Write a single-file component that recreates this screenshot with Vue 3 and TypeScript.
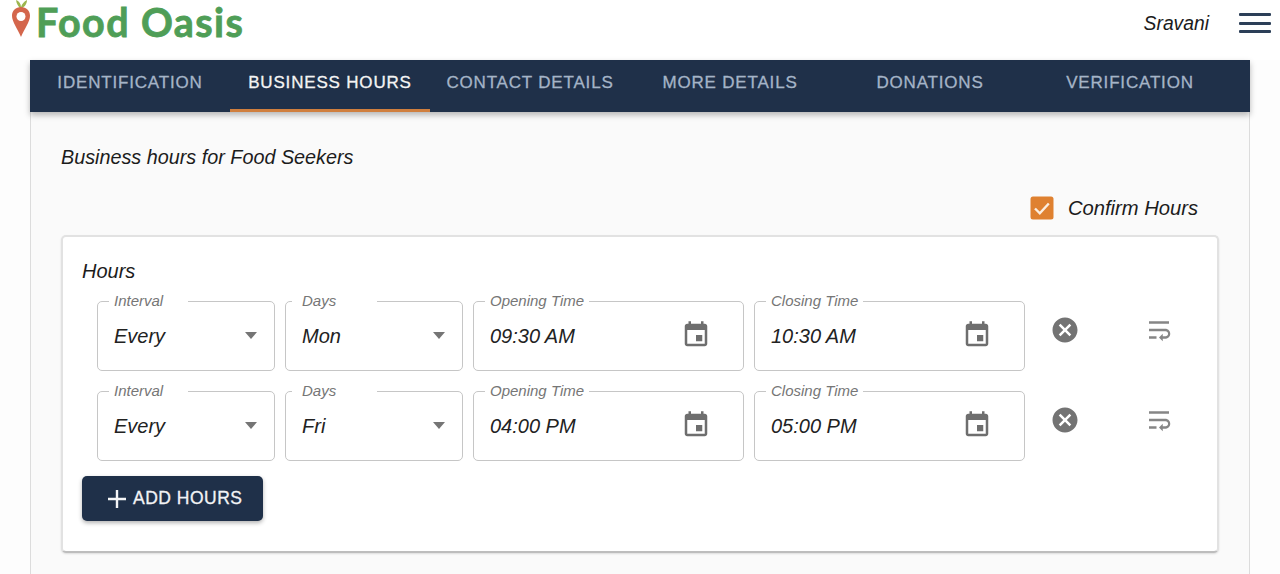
<script setup lang="ts">
interface HourRow { interval: string; day: string; open: string; close: string }

const tabs: string[] = ['Identification', 'Business Hours', 'Contact Details', 'More Details', 'Donations', 'Verification']
const rows: HourRow[] = [
  { interval: 'Every', day: 'Mon', open: '09:30 AM', close: '10:30 AM' },
  { interval: 'Every', day: 'Fri', open: '04:00 PM', close: '05:00 PM' }
]
const calendarPath = 'M17 12h-5v5h5v-5zM16 1v2H8V1H6v2H5c-1.11 0-1.99.9-1.99 2L3 19c0 1.1.89 2 2 2h14c1.1 0 2-.9 2-2V5c0-1.1-.9-2-2-2h-1V1h-2zm3 18H5V8h14v11z'
</script>

<template>
  <div class="page">
    <header class="topbar">
      <div class="brand">
        <svg class="pin" width="22" height="38" viewBox="0 0 22 38">
          <path d="M10.500 8.500C8.500 6.500 6.500 4 6 0c3 1 5 4 5 7 1-3 3-5.500 6-7 0 4-2.500 7-5.500 8.500z" fill="#9db54e" />
          <path d="M11 7c5.200 0 9 3.800 9 8.800 0 5.700-5.200 12.500-9 21.200C7.200 28.300 2 21.500 2 15.800 2 10.800 5.800 7 11 7z" fill="#d4664c" />
          <circle cx="11" cy="16.500" r="4.500" fill="#fff" />
        </svg>
        <span class="wordmark">Food Oasis</span>
      </div>
      <div class="user">
        <span class="username">Sravani</span>
        <div class="burger"><i></i><i></i><i></i></div>
      </div>
    </header>

    <main class="content">
      <nav class="tabs">
        <div v-for="(tab, i) in tabs" :key="tab" class="tab" :class="{ active: i === 1 }">{{ tab }}</div>
      </nav>

      <section class="panel">
        <p class="intro">Business hours for Food Seekers</p>
        <div class="confirm">
          <svg class="check" width="24" height="24" viewBox="0 0 24 24">
            <rect x="0.500" y="0.500" width="23" height="23" rx="2.500" fill="#df8130" />
            <path d="M5 12.500l4.800 4.800 9-9.800" fill="none" stroke="#fbeee0" stroke-width="2.400" />
          </svg>
          <span>Confirm Hours</span>
        </div>

        <div class="card">
          <div class="card-title">Hours</div>
          <div v-for="row in rows" :key="row.day" class="row">
            <div class="field select">
              <span class="label label-interval">Interval</span>
              <span class="value">{{ row.interval }}</span>
              <span class="caret"></span>
            </div>
            <div class="field select">
              <span class="label label-days">Days</span>
              <span class="value">{{ row.day }}</span>
              <span class="caret"></span>
            </div>
            <div class="field time">
              <span class="label">Opening Time</span>
              <span class="value">{{ row.open }}</span>
              <svg class="cal" width="30" height="30" viewBox="0 0 24 24"><path :d="calendarPath" /></svg>
            </div>
            <div class="field time">
              <span class="label">Closing Time</span>
              <span class="value">{{ row.close }}</span>
              <svg class="cal" width="30" height="30" viewBox="0 0 24 24"><path :d="calendarPath" /></svg>
            </div>
            <div class="actions">
              <svg width="30" height="30" viewBox="0 0 24 24"><path d="M12 2C6.470 2 2 6.470 2 12s4.470 10 10 10 10-4.470 10-10S17.530 2 12 2zm5 13.590L15.590 17 12 13.410 8.410 17 7 15.590 10.590 12 7 8.410 8.410 7 12 10.590 15.590 7 17 8.410 13.410 12 17 15.590z" /></svg>
              <svg width="30" height="30" viewBox="0 0 24 24"><path d="M4 19h6v-2H4v2zM20 5H4v2h16V5zm-3 6H4v2h13.250c1.100 0 2 .9 2 2s-.9 2-2 2H15v-2l-3 3 3 3v-2h2c2.210 0 4-1.790 4-4s-1.790-4-4-4z" /></svg>
            </div>
          </div>
          <button class="add" type="button">
            <svg width="20" height="20" viewBox="0 0 20 20"><path d="M10 1v18M1 10h18" stroke="#f4f5f7" stroke-width="2.400" fill="none" /></svg>
            <span>ADD HOURS</span>
          </button>
        </div>
      </section>
    </main>
  </div>
</template>

<style>
html, body { margin: 0; background: #fff; }
</style>

<style scoped>
.page {
  width: 1280px;
  height: 574px;
  overflow: hidden;
  background: #fdfdfd;
  font-family: "Liberation Sans", Arial, sans-serif;
  color: #1c1c1c;
}
.topbar {
  height: 60px;
  display: flex;
  justify-content: space-between;
  align-items: center;
  padding: 0 9px 0 10px;
  box-sizing: border-box;
  background: #fff;
}
.brand {
  display: flex;
  align-items: flex-start;
  height: 60px;
}
.pin { display: block; flex: none; margin-right: 4px; }
.wordmark {
  font-family: "Lato", sans-serif;
  font-size: 39.500px;
  font-weight: 700;
  line-height: 43px;
  letter-spacing: 1.400px;
  color: #4f9e57;
  -webkit-text-stroke: 0.800px #4f9e57;
}
.user {
  display: flex;
  align-items: center;
  gap: 30px;
  height: 46px;
  align-self: flex-start;
}
.username { font-style: italic; font-size: 19.300px; padding-top: 1px; }
.burger { width: 32px; display: flex; flex-direction: column; gap: 5.500px; }
.burger i { display: block; height: 3px; background: #2c3f58; border-radius: 1px; }

.content { padding: 0 30px; }
.tabs {
  position: relative;
  z-index: 1;
  display: flex;
  height: 52px;
  background: #1f3049;
  box-shadow: 0 3px 6px rgba(0, 0, 0, 0.28);
}
.tab {
  width: 200px;
  height: 52px;
  box-sizing: border-box;
  padding-top: 13px;
  line-height: 20px;
  text-align: center;
  text-transform: uppercase;
  font-size: 17px;
  letter-spacing: 0.820px;
  color: #a5b4c7;
  -webkit-text-stroke: 0.300px #a5b4c7;
}
.tab.active {
  color: #f4f4f4;
  -webkit-text-stroke: 0.300px #f4f4f4;
  border-bottom: 3px solid #d07f3e;
}
.panel {
  height: 480px;
  box-sizing: border-box;
  background: #fafafa;
  border: 1px solid #dcdcdc;
  border-top: 0;
  padding: 0 30px;
}
.intro {
  margin: 0;
  padding-top: 33px;
  font-style: italic;
  font-size: 19.800px;
  line-height: 24px;
}
.confirm {
  display: flex;
  justify-content: flex-end;
  align-items: center;
  gap: 14px;
  height: 24px;
  margin-top: 27px;
  padding-right: 21px;
  font-style: italic;
  font-size: 20.200px;
}
.check { display: block; margin-top: -1px; }
.card {
  height: 318px;
  box-sizing: border-box;
  margin-top: 15px;
  background: #fff;
  border: 2px solid #e2e2e2;
  border-bottom-color: #bdbdbd;
  border-radius: 5px;
  box-shadow: 0 1px 2px rgba(0, 0, 0, 0.12);
  padding: 0 19px;
}
.card-title {
  box-sizing: border-box;
  padding-top: 22px;
  font-style: italic;
  font-size: 20px;
  line-height: 24px;
  height: 64px;
}
.row {
  display: flex;
  gap: 10px;
  height: 70px;
  margin-bottom: 20px;
  padding-left: 15px;
}
.field {
  position: relative;
  box-sizing: border-box;
  height: 70px;
  border: 1px solid #c6c6c6;
  border-radius: 5px;
  display: flex;
  align-items: center;
  justify-content: space-between;
  padding: 0 16px;
}
.select { width: 178px; padding-right: 17px; }
.time { width: 271px; padding-right: 32px; }
.label {
  position: absolute;
  top: -10px;
  left: 11px;
  padding: 0 5px;
  background: #fff;
  font-style: italic;
  font-size: 15px;
  line-height: 17px;
  color: #767676;
}
.label-interval { padding-right: 25px; }
.label-days { padding-right: 41px; left: 6px; padding-left: 10px; }
.value { font-style: italic; font-size: 20px; line-height: 24px; color: #222; }
.caret {
  width: 0;
  height: 0;
  border-left: 6.500px solid transparent;
  border-right: 6.500px solid transparent;
  border-top: 7px solid #757575;
  margin-top: -2px;
}
.cal { fill: #6e6e6e; display: block; margin-top: -2px; }
.actions {
  display: flex;
  gap: 64px;
  padding-left: 15px;
  height: 58px;
  align-items: center;
  fill: #737373;
}
.actions svg { display: block; }
.actions svg:last-child { fill: #868686; }
.add {
  display: flex;
  align-items: center;
  gap: 6px;
  width: 181px;
  height: 45px;
  margin-top: -5px;
  padding: 0 0 0 25px;
  box-sizing: border-box;
  border: 0;
  border-radius: 5px;
  background: #1f3049;
  color: #f2f3f5;
  font-family: "Liberation Sans", Arial, sans-serif;
  font-size: 17.500px;
  letter-spacing: 0.500px;
  -webkit-text-stroke: 0.300px #f2f3f5;
  box-shadow: 0 2px 4px rgba(0, 0, 0, 0.3);
}
</style>
